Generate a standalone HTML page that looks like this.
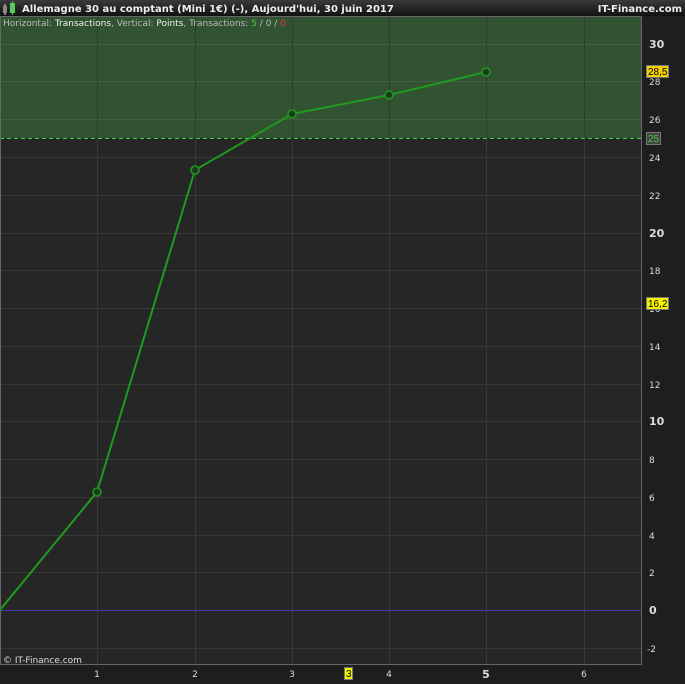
<!DOCTYPE html><html><head><style>
body{margin:0;background:#1e1e1e;width:685px;height:680px;overflow:hidden;font-family:"DejaVu Sans","Liberation Sans",sans-serif}
</style></head><body>
<svg width="685" height="680" xmlns="http://www.w3.org/2000/svg" font-family="DejaVu Sans, Liberation Sans, sans-serif">
<defs><linearGradient id="h" x1="0" y1="0" x2="0" y2="1"><stop offset="0" stop-color="#3a3a3a"/><stop offset="1" stop-color="#111"/></linearGradient></defs>
<rect width="685" height="680" fill="#1e1e1e"/>
<rect width="685" height="16" fill="url(#h)"/>
<rect x="3" y="6" width="4" height="7" fill="#888"/><rect x="4" y="4" width="2" height="11" fill="#888"/>
<rect x="10" y="3" width="5" height="10" fill="#5c5"/><rect x="12" y="1" width="1" height="14" fill="#5c5"/>
<text x="22" y="12" fill="#eee" font-size="10" font-weight="bold">Allemagne 30 au comptant (Mini 1€) (-), Aujourd'hui, 30 juin 2017</text>
<text x="682" y="12" fill="#eee" font-size="10" font-weight="bold" text-anchor="end">IT-Finance.com</text>
<rect x="0" y="17" width="641" height="647" fill="#262626"/>
<rect x="0" y="17" width="641" height="121" fill="#325332"/>
<g stroke="#383838" stroke-width="1">
<line x1="0" x2="641" y1="44.5" y2="44.5" stroke="#416041"/><line x1="0" x2="641" y1="81.5" y2="81.5" stroke="#416041"/><line x1="0" x2="641" y1="119.5" y2="119.5" stroke="#416041"/>
<line x1="0" x2="641" y1="157.5" y2="157.5"/><line x1="0" x2="641" y1="195.5" y2="195.5"/><line x1="0" x2="641" y1="233.5" y2="233.5"/><line x1="0" x2="641" y1="270.5" y2="270.5"/><line x1="0" x2="641" y1="308.5" y2="308.5"/><line x1="0" x2="641" y1="346.5" y2="346.5"/><line x1="0" x2="641" y1="384.5" y2="384.5"/><line x1="0" x2="641" y1="421.5" y2="421.5"/><line x1="0" x2="641" y1="459.5" y2="459.5"/><line x1="0" x2="641" y1="497.5" y2="497.5"/><line x1="0" x2="641" y1="535.5" y2="535.5"/><line x1="0" x2="641" y1="572.5" y2="572.5"/><line x1="0" x2="641" y1="648.5" y2="648.5"/>
<line x1="97.5" x2="97.5" y1="17" y2="664"/><line x1="195.5" x2="195.5" y1="17" y2="664"/><line x1="292.5" x2="292.5" y1="17" y2="664"/><line x1="389.5" x2="389.5" y1="17" y2="664"/><line x1="486.5" x2="486.5" y1="17" y2="664"/><line x1="584.5" x2="584.5" y1="17" y2="664"/>
</g>
<line x1="0" x2="641" y1="610.5" y2="610.5" stroke="#3a3aa8"/>
<line x1="0" x2="641" y1="138.5" y2="138.5" stroke="#4c4" stroke-dasharray="4,3"/>
<rect x="0.5" y="16.5" width="641" height="648" fill="none" stroke="#666"/>
<text x="3" y="26" fill="#bbb" font-size="9">Horizontal: <tspan fill="#eee">Transactions</tspan>, Vertical: <tspan fill="#eee">Points</tspan>, Transactions: <tspan fill="#4c4">5</tspan> / 0 / <tspan fill="#e33">0</tspan></text>
<polyline points="0,610 97,492 195,170 292,114 389,95 486,72" fill="none" stroke="#1e9a1e" stroke-width="2"/>
<g fill="#1f3a1f" stroke="#1e9a1e" stroke-width="1.6"><circle cx="97" cy="492" r="4"/><circle cx="195" cy="170" r="4"/><circle cx="292" cy="114" r="4"/><circle cx="389" cy="95" r="4"/><circle cx="486" cy="72" r="4"/></g>
<g fill="#ddd" font-size="9">
<text x="649" y="48" font-size="11" font-weight="bold">30</text><text x="649" y="85">28</text><text x="649" y="123">26</text><text x="649" y="161">24</text><text x="649" y="199">22</text><text x="649" y="237" font-size="11" font-weight="bold">20</text><text x="649" y="274">18</text><text x="649" y="312">16</text><text x="649" y="350">14</text><text x="649" y="388">12</text><text x="649" y="425" font-size="11" font-weight="bold">10</text><text x="649" y="463">8</text><text x="649" y="501">6</text><text x="649" y="539">4</text><text x="649" y="576">2</text><text x="649" y="614" font-size="11" font-weight="bold">0</text><text x="647" y="652">-2</text>
<text x="97" y="677" text-anchor="middle">1</text><text x="195" y="677" text-anchor="middle">2</text><text x="292" y="677" text-anchor="middle">3</text><text x="389" y="677" text-anchor="middle">4</text><text x="486" y="678" text-anchor="middle" font-size="11" font-weight="bold">5</text><text x="584" y="677" text-anchor="middle">6</text>
</g>
<g font-family="Liberation Sans, sans-serif" font-size="10">
<rect x="646.5" y="65.5" width="22" height="12" fill="#f5d000" stroke="#777"/><text x="648" y="75" fill="#000">28,5</text>
<rect x="646.5" y="132.5" width="14" height="12" fill="#444" stroke="#777"/><text x="648" y="142" fill="#4c4">25</text>
<rect x="646.5" y="297.5" width="22" height="12" fill="#f5f500" stroke="#777"/><text x="648" y="307" fill="#000">16,2</text>
<rect x="344.5" y="667.5" width="8" height="12" fill="#f5f500" stroke="#777"/><text x="346" y="677" fill="#000">3</text>
</g>
<text x="3" y="663" fill="#ddd" font-size="9">© IT-Finance.com</text>
</svg>
</body></html>
